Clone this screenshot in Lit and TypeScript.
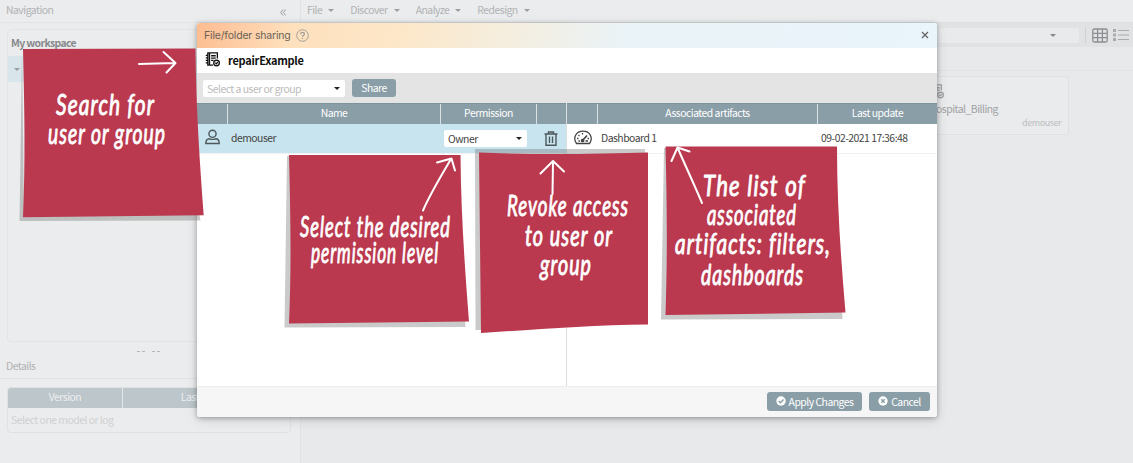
import { LitElement, html, css, svg } from "lit";
import { customElement } from "lit/decorators.js";

interface NoteLine { text: string; x: number; y: number; w: number }
interface Note { shape: string; shadow: string; arrow: string; lines: NoteLine[] }

const NOTES: Note[] = [
  {
    shape: "M23 49L195.5 48.5C196 110 200 165 203.7 215.3L23 217.3C25.5 160 24.500 110 23 49Z",
    shadow: "M22 51L19.500 221L200.500 220.500L199 212L24 212Z",
    arrow: "M139 64L175 63M163.500 52L175.500 63L166.500 72.500",
    lines: [
      { text: "Search for", x: 56, y: 115, w: 99 },
      { text: "user or group", x: 48, y: 144, w: 118 },
    ],
  },
  {
    shape: "M289 155L460.500 155C461 215 465 270 469 321.500L289 323.500C291.500 265 290.500 215 289 155Z",
    shadow: "M287 156L284.500 327.500L465.500 327L465 318L291 318L291 156Z",
    arrow: "M423 210.500C430 194 441 176 451 159M437 162.500L451.500 158.500L455 170.500",
    lines: [
      { text: "Select the desired", x: 300, y: 236.500, w: 151 },
      { text: "permission level", x: 311, y: 263, w: 128 },
    ],
  },
  {
    shape: "M479 152.500C530 155 600 154 648 152.500L648 324.500C590 325 530 330 481 333L479 152.500Z",
    shadow: "M475 149L645 149L645 156L482 158L483 330L475.500 330Z",
    arrow: "M552.500 194L553 161.500M540.500 173.500L553 161L564 171.500",
    lines: [
      { text: "Revoke access", x: 507, y: 216, w: 122 },
      { text: "to user or", x: 525, y: 246, w: 88 },
      { text: "group", x: 540, y: 274.500, w: 52 },
    ],
  },
  {
    shape: "M665.500 146.500L837 146.500C837 205 841 260 845.500 312.500L665.500 315C667.500 255 667 205 665.500 146.500Z",
    shadow: "M664 148L661 319.500L842.500 319L842 310L668 310L668 148Z",
    arrow: "M702 203C694 184 685 165 677.500 147.500M671.500 161L677.500 147.500L689.500 151.500",
    lines: [
      { text: "The list of", x: 703, y: 195.500, w: 103 },
      { text: "associated", x: 707, y: 224.500, w: 90 },
      { text: "artifacts: filters,", x: 675, y: 254, w: 156 },
      { text: "dashboards", x: 701, y: 285, w: 103 },
    ],
  },
];

const logIcon = html`<svg class="log" viewBox="0 0 16 16" fill="none" stroke="currentColor" stroke-width="1.400">
  <path d="M13.200 7V1H3V14H8.500M4.800 1V14M6.500 4H11.500M6.500 6.500H11.500M6.500 9H9M.8 3.500H3.500M.8 6.200H3.500M.8 8.900H3.500M.8 11.600H3.500"/>
  <circle cx="12.300" cy="11.800" r="3"/><path d="M11 11.500L12.200 12.600L13.600 10.800"/></svg>`;

@customElement("sticky-notes")
export class StickyNotes extends LitElement {
  static styles = css`
    :host { display: block; pointer-events: none; }
    svg { display: block; width: 1133px; height: 463px; overflow: hidden; }
    .shadow { fill: #777; opacity: .38; filter: blur(.7px); }
    .paper { fill: #ba394f; }
    .arrow { fill: none; stroke: #fff; stroke-width: 2; stroke-linecap: round; stroke-linejoin: round; }
    .hand { font: italic 400 28px "Lato", sans-serif; letter-spacing: 1.500px; fill: #fff; stroke: #fff; stroke-width: .9; stroke-linejoin: round; }
  `;
  render() {
    return html`<svg viewBox="0 0 1133 463">${NOTES.map((n) => svg`
      <path class="shadow" d=${n.shadow}></path>
      <path class="paper" d=${n.shape}></path>
      ${n.lines.map((l) => svg`<text class="hand" x=${l.x} y=${l.y} textLength=${l.w} lengthAdjust="spacingAndGlyphs">${l.text}</text>`)}
      <path class="arrow" d=${n.arrow}></path>`)}</svg>`;
  }
}

@customElement("share-dialog")
export class ShareDialog extends LitElement {
  static styles = css`
    * { box-sizing: border-box; }
    :host { display: flex; flex-direction: column; width: 740px; height: 394px; background: #fff; border-radius: 3px; overflow: hidden; color: #444; font: 10.400px/14px "Noto Sans CJK SC", sans-serif; letter-spacing: -.5px; box-shadow: 0 1px 5px rgba(0,0,0,.3), 0 3px 12px rgba(0,0,0,.13); }
    .title { height: 25px; flex: none; display: flex; align-items: center; padding: 0 8px 0 7px; background: linear-gradient(105deg, #fdbc90 0, #fee0bd 13%, #fde7c8 27%, #f4eee0 43%, #eaf3f7 58%, #e9f4fb 100%); color: #6a6256; }
    .title b { font: 400 10.500px/14px "Inter", sans-serif; letter-spacing: -.18px; width: 92px; white-space: nowrap; }
    .help { width: 13px; height: 13px; color: #a0a09a; flex: 1; display: flex; }
    .help svg { width: 13px; height: 13px; }
    .close { width: 8px; height: 8px; margin-top: -1px; }
    .subject { height: 25px; flex: none; display: flex; align-items: center; padding: 0 0 2px 8px; gap: 8px; color: #111; font-weight: 700; font-size: 11px; letter-spacing: -.25px; }
    .log { width: 15px; height: 15px; }
    .bar { height: 30px; flex: none; display: flex; align-items: center; padding-left: 6px; gap: 7px; background: #e4e4e4; }
    .select { display: flex; align-items: center; justify-content: space-between; height: 17px; line-height: 15px; background: #fff; border-radius: 2px; padding: 0 5px 0 4px; }
    .who { width: 142px; color: #bbb; }
    .caret { width: 0; border: 3px solid transparent; border-top: 3.500px solid #222; border-bottom: 0; }
    .btn { height: 18px; border-radius: 3px; background: #8a9ea7; color: #fff; display: flex; align-items: center; justify-content: center; }
    .share { width: 44px; line-height: 16px; }
    .tables { flex: 1; display: flex; }
    .left { width: 370px; border-right: 1px solid #ddd; }
    .right { width: 370px; }
    .row { display: grid; align-items: center; }
    .left .row { grid-template-columns: 31px 213px 96px 29px; }
    .right .row { grid-template-columns: 31px 220px 1fr; }
    .head { height: 21px; background: #8a9ea7; color: #fff; border-top: 1px solid #7e949d; }
    .head span { height: 20px; line-height: 18px; text-align: center; border-right: 1px solid #dbe2e4; }
    .head span:last-child { border-right: 0; }
    .data { height: 30px; border-bottom: 1px solid #f2f2f2; }
    .left .data { background: #c8e5ef; }
    .cell { padding: 0 0 1px 3px; white-space: nowrap; }
    .owner { width: 83px; margin-left: 3px; }
    .user { width: 15px; height: 16px; margin-left: 8px; margin-top: -4px; }
    .trash { width: 14px; height: 15px; margin-left: 7px; margin-top: -1px; }
    .gauge { width: 18px; height: 15px; margin-left: 7px; margin-top: -3px; }
    .foot { height: 31px; flex: none; border-top: 1px solid #eee; background: #f6f6f6; display: flex; align-items: center; justify-content: flex-end; gap: 7px; padding: 0 7px 2px 0; }
    .foot .btn { height: 19px; gap: 3px; line-height: 17px; }
    .foot svg { width: 10px; height: 10px; margin-top: -1px; }
    .apply { width: 95px; } .cancel { width: 61px; }
  `;
  render() {
    return html`
      <div class="title"><b>File/folder sharing</b>
        <span class="help"><svg viewBox="0 0 13 13" fill="none" stroke="currentColor"><circle cx="6.500" cy="6.500" r="5.800"/><path stroke-width="1.300" d="M4.600 5.200C4.700 2.800 8.400 2.900 8.400 5C8.400 6.300 6.500 6.300 6.500 8M6.500 9V10"/></svg></span>
        <svg class="close" viewBox="0 0 8 8" stroke="#666" stroke-width="1.300"><path d="M1 1L7 7M7 1L1 7"/></svg>
      </div>
      <div class="subject">${logIcon}<span>repairExample</span></div>
      <div class="bar"><div class="select who">Select a user or group<i class="caret"></i></div><div class="btn share">Share</div></div>
      <div class="tables">
        <div class="left">
          <div class="row head"><span></span><span>Name</span><span>Permission</span><span></span></div>
          <div class="row data">
            <svg class="user" viewBox="0 0 15 16" fill="none" stroke="#4d575c" stroke-width="1.400"><circle cx="7.500" cy="4.800" r="3.600"/><path d="M4.500 9.800C2 9.800 .8 11.500 .8 14.500H14.200C14.200 11.500 13 9.800 10.500 9.800Q7.500 11 4.500 9.800Z"/></svg>
            <div class="cell">demouser</div>
            <div class="select owner">Owner<i class="caret"></i></div>
            <svg class="trash" viewBox="0 0 14 15" fill="none" stroke="#4d575c" stroke-width="1.400"><path d="M.5 3H13.500M4.500 3V1H9.500V3M2 3V14.200H12V3M5.500 5.500V12M8.500 5.500V12"/></svg>
          </div>
        </div>
        <div class="right">
          <div class="row head"><span></span><span>Associated artifacts</span><span>Last update</span></div>
          <div class="row data">
            <svg class="gauge" viewBox="0 0 18 15" fill="none" stroke="#444" stroke-width="1.300"><path d="M2.500 13.500C-1.500 8 2 1.200 9 1.200S19.500 8 15.500 13.500Z"/><path stroke-width="1.700" d="M8 11L13 5.500"/><circle cx="8.600" cy="10.500" r="1.200"/><path d="M3 8.500H4.500M4.500 5L5.500 6M8.500 3V4.500M13.500 8.500H15M4.500 11H6M11.500 11H14"/></svg>
            <div class="cell">Dashboard 1</div><div class="cell">09-02-2021 17:36:48</div>
          </div>
        </div>
      </div>
      <div class="foot">
        <div class="btn apply"><svg viewBox="0 0 10 10"><circle cx="5" cy="5" r="4.700" fill="#fff"/><path d="M2.700 5L4.400 6.700L7.500 3.500" fill="none" stroke="#8a9ea7" stroke-width="1.500"/></svg>Apply Changes</div>
        <div class="btn cancel"><svg viewBox="0 0 10 10"><circle cx="5" cy="5" r="4.700" fill="#fff"/><path d="M3.300 3.300L6.700 6.700M6.700 3.300L3.300 6.700" stroke="#8a9ea7" stroke-width="1.500"/></svg>Cancel</div>
      </div>`;
  }
}

@customElement("app-root")
export class AppRoot extends LitElement {
  static styles = css`
    * { box-sizing: border-box; }
    :host { display: flex; position: relative; width: 1133px; height: 463px; overflow: hidden; background: #e9eaec; color: #b0b2b4; font: 10.400px/14px "Noto Sans CJK SC", sans-serif; letter-spacing: -.5px; }
    .nav { width: 301px; height: 463px; border-right: 1px solid #e0e2e4; display: flex; flex-direction: column; background: #ebeced; }
    .navhead { height: 23px; flex: none; display: flex; justify-content: space-between; padding: 3px 14px 0 6px; border-bottom: 1px solid #e2e3e4; }
    .collapse { width: 6px; height: 7px; margin-top: 6px; }
    .tree { height: 313px; flex: none; margin: 6px 10px 0 7px; border: 1px solid #e3e4e6; border-radius: 4px; }
    .root { height: 26px; padding: 6px 0 0 3px; font-weight: 700; letter-spacing: -.62px; color: #87898c; }
    .item { height: 26px; background: #d8e5ea; display: flex; align-items: center; padding-left: 6px; }
    .caret { width: 0; border: 3px solid transparent; border-top: 3px solid #9c9ea0; border-bottom: 0; }
    .grip { height: 16px; display: flex; gap: 7px; padding: 9px 0 0 137px; }
    .grip i { width: 8px; border-top: 1px dashed #b5b7b8; }
    .details { height: 21px; padding: 1px 6px 0; border-bottom: 1px solid #e0e1e2; }
    .table { height: 46px; margin: 8px 9px 0 7px; border: 1px solid #e0e1e3; border-radius: 4px; overflow: hidden; color: #cfd1d3; }
    .thead { display: flex; background: #bdc6ca; height: 20px; line-height: 18px; color: #edf0f1; text-align: center; }
    .version { width: 115px; border-right: 1px solid #e2e6e8; } .last { flex: 1; }
    .empty { padding: 5px 3px; }
    .main { flex: 1; display: flex; flex-direction: column; background: #e8e9eb; }
    .menu { height: 22px; flex: none; display: flex; padding: 3px 0 0 6px; background: #ebeced; gap: 16px; }
    .menu span { display: flex; align-items: center; gap: 6px; height: 14px; white-space: nowrap; }
    .tools { height: 25px; flex: none; background: #e1e2e4; border-top: 1px solid #dddfe0; display: flex; align-items: center; justify-content: flex-end; padding-right: 4px; }
    .search { width: 480px; height: 15px; background: #e9eaec; display: flex; align-items: center; justify-content: flex-end; padding-right: 23px; border-radius: 2px; margin-right: 6px; }
    .search .caret { border-top-color: #858789; }
    .sep { width: 1px; height: 16px; background: #d0d2d4; margin-right: 6px; }
    .grid { width: 16px; height: 15px; margin-right: 5px; } .list { width: 16px; height: 14px; }
    .crumbs { height: 24px; flex: none; border-bottom: 1px solid #e1e3e5; }
    .files { display: flex; justify-content: flex-end; padding: 5px 64px 0 0; }
    .file { width: 146px; height: 59px; border: 1px solid #dfe1e3; border-radius: 3px; background: #eaebec; padding: 7px 7px 0 5px; color: #a0a2a4; display: flex; flex-direction: column; align-items: flex-start; }
    .log { width: 15px; height: 15px; }
    .file span { margin-top: 3px; }
    .file small { align-self: flex-end; font-size: 9px; line-height: 12px; letter-spacing: -.45px; margin-top: 1px; color: #bcbec0; }
    .dialog { position: absolute; left: 197px; top: 23px; }
    .notes { position: absolute; left: 0; top: 0; }
  `;
  render() {
    return html`
      <aside class="nav">
        <div class="navhead">Navigation<svg class="collapse" viewBox="0 0 6 7" fill="none" stroke="#999b9d"><path d="M3 .5L.7 3.500L3 6.500M5.700 .5L3.400 3.500L5.700 6.500"/></svg></div>
        <div class="tree"><div class="root">My workspace</div><div class="item"><i class="caret"></i></div></div>
        <div class="grip"><i></i><i></i></div>
        <div class="details">Details</div>
        <div class="table"><div class="thead"><span class="version">Version</span><span class="last">Last update</span></div><div class="empty">Select one model or log</div></div>
      </aside>
      <main class="main">
        <nav class="menu">${["File", "Discover", "Analyze", "Redesign"].map((m) => html`<span>${m}<i class="caret"></i></span>`)}</nav>
        <div class="tools">
          <div class="search"><i class="caret"></i></div><i class="sep"></i>
          <svg class="grid" viewBox="0 0 16 15" fill="none" stroke="#8c8e91" stroke-width="1.300"><rect x=".8" y="1" width="14.400" height="13" rx="1.500"/><path d="M1 5.300H15M1 9.700H15M5.600 1V14M10.400 1V14"/></svg>
          <svg class="list" viewBox="0 0 16 14" stroke="#a9abad"><path stroke-width="3" d="M0 2.500H3M0 7H3M0 11.500H3"/><path stroke-width="1.200" d="M5 2.500H16M5 7H16M5 11.500H16"/></svg>
        </div>
        <div class="crumbs"></div>
        <div class="files"><div class="file">${logIcon}<span>Hospital_Billing</span><small>demouser</small></div></div>
      </main>
      <share-dialog class="dialog"></share-dialog>
      <sticky-notes class="notes"></sticky-notes>`;
  }
}
